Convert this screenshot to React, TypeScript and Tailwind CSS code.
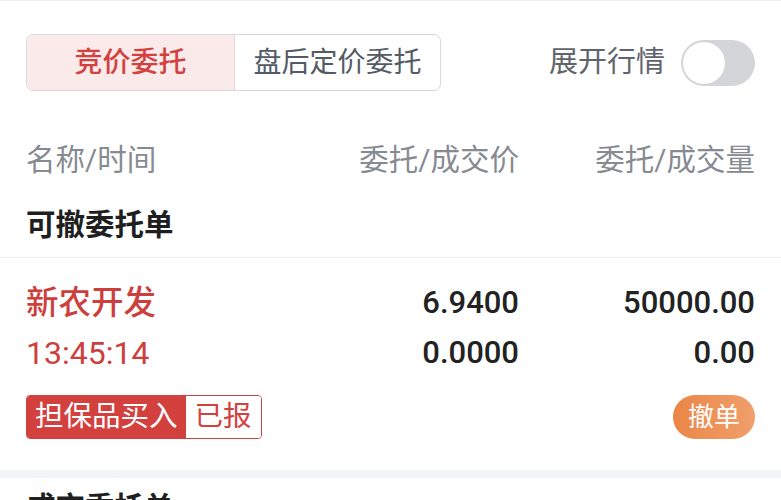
const cjk = "font-['Roboto','Noto_Sans_CJK_SC',sans-serif]";

export default function App() {
  return (
    <div className={`w-full min-h-[500px] bg-white border-t border-[#eeeeee] ${cjk}`}>
      <div className="flex items-center justify-between px-[26px] pt-[33px]">
        <div className="flex h-[57px] w-[415px] rounded-[7px] border border-[#d9d9d9] overflow-hidden text-[28px] leading-none">
          <div className="flex w-[207px] items-center justify-center bg-[#fbeaea] text-[#d3413f] font-medium">
            竞价委托
          </div>
          <div className="flex flex-1 items-center justify-center border-l border-[#e6d6d6] text-[#545b66]">
            盘后定价委托
          </div>
        </div>
        <div className="flex items-center gap-[16px]">
          <span className="text-[29px] text-[#60656d]">展开行情</span>
          <div className="relative h-[46px] w-[74px] rounded-full bg-[#d3d5d8]">
            <div className="absolute left-[1px] top-[1px] h-[44px] w-[44px] rounded-full bg-white border border-[#d0d2d5]" />
          </div>
        </div>
      </div>

      <div className="grid grid-cols-[1fr_200px_236px] px-[26px] mt-[47px] h-[40px] items-center text-[29.5px] text-[#868a91]">
        <span>名称/时间</span>
        <span className="text-right">委托/成交价</span>
        <span className="text-right">委托/成交量</span>
      </div>

      <div className="px-[26px] mt-[27px] pb-[13px] h-[53px] text-[29.5px] leading-[40px] font-bold text-[#1f1f1f] border-b border-[#eeeeee]">
        可撤委托单
      </div>

      <div className="px-[26px] pt-[20px] pb-[31px]">
        <div className="grid grid-cols-[1fr_200px_236px] text-[31px] leading-[50px]">
          <span className="text-[32.5px] font-medium text-[#cc3f3c]">新农开发</span>
          <span className="text-right font-medium text-[#222222]">6.9400</span>
          <span className="text-right font-medium text-[#222222]">50000.00</span>
          <span className="text-[32px] text-[#cc3f3c]">13:45:14</span>
          <span className="text-right font-medium text-[#222222]">0.0000</span>
          <span className="text-right font-medium text-[#222222]">0.00</span>
        </div>
        <div className="mt-[17px] flex items-center justify-between">
          <div className="flex h-[44px] rounded-[4px] border border-[#d3413f] overflow-hidden text-[28.5px] leading-none">
            <div className="flex items-center bg-[#d3413f] px-[8px] text-white">担保品买入</div>
            <div className="flex items-center bg-white px-[9px] text-[#d3413f]">已报</div>
          </div>
          <button className="h-[44px] w-[82px] rounded-full bg-gradient-to-r from-[#ea8645] to-[#f09f6c] text-[26px] text-white leading-none">
            撤单
          </button>
        </div>
      </div>

      <div className="h-[8px] bg-[#f3f4f6]" />

      <div className="px-[26px] pt-[10px] text-[29.5px] leading-[40px] font-bold text-[#1f1f1f]">
        成交委托单
      </div>
    </div>
  );
}
